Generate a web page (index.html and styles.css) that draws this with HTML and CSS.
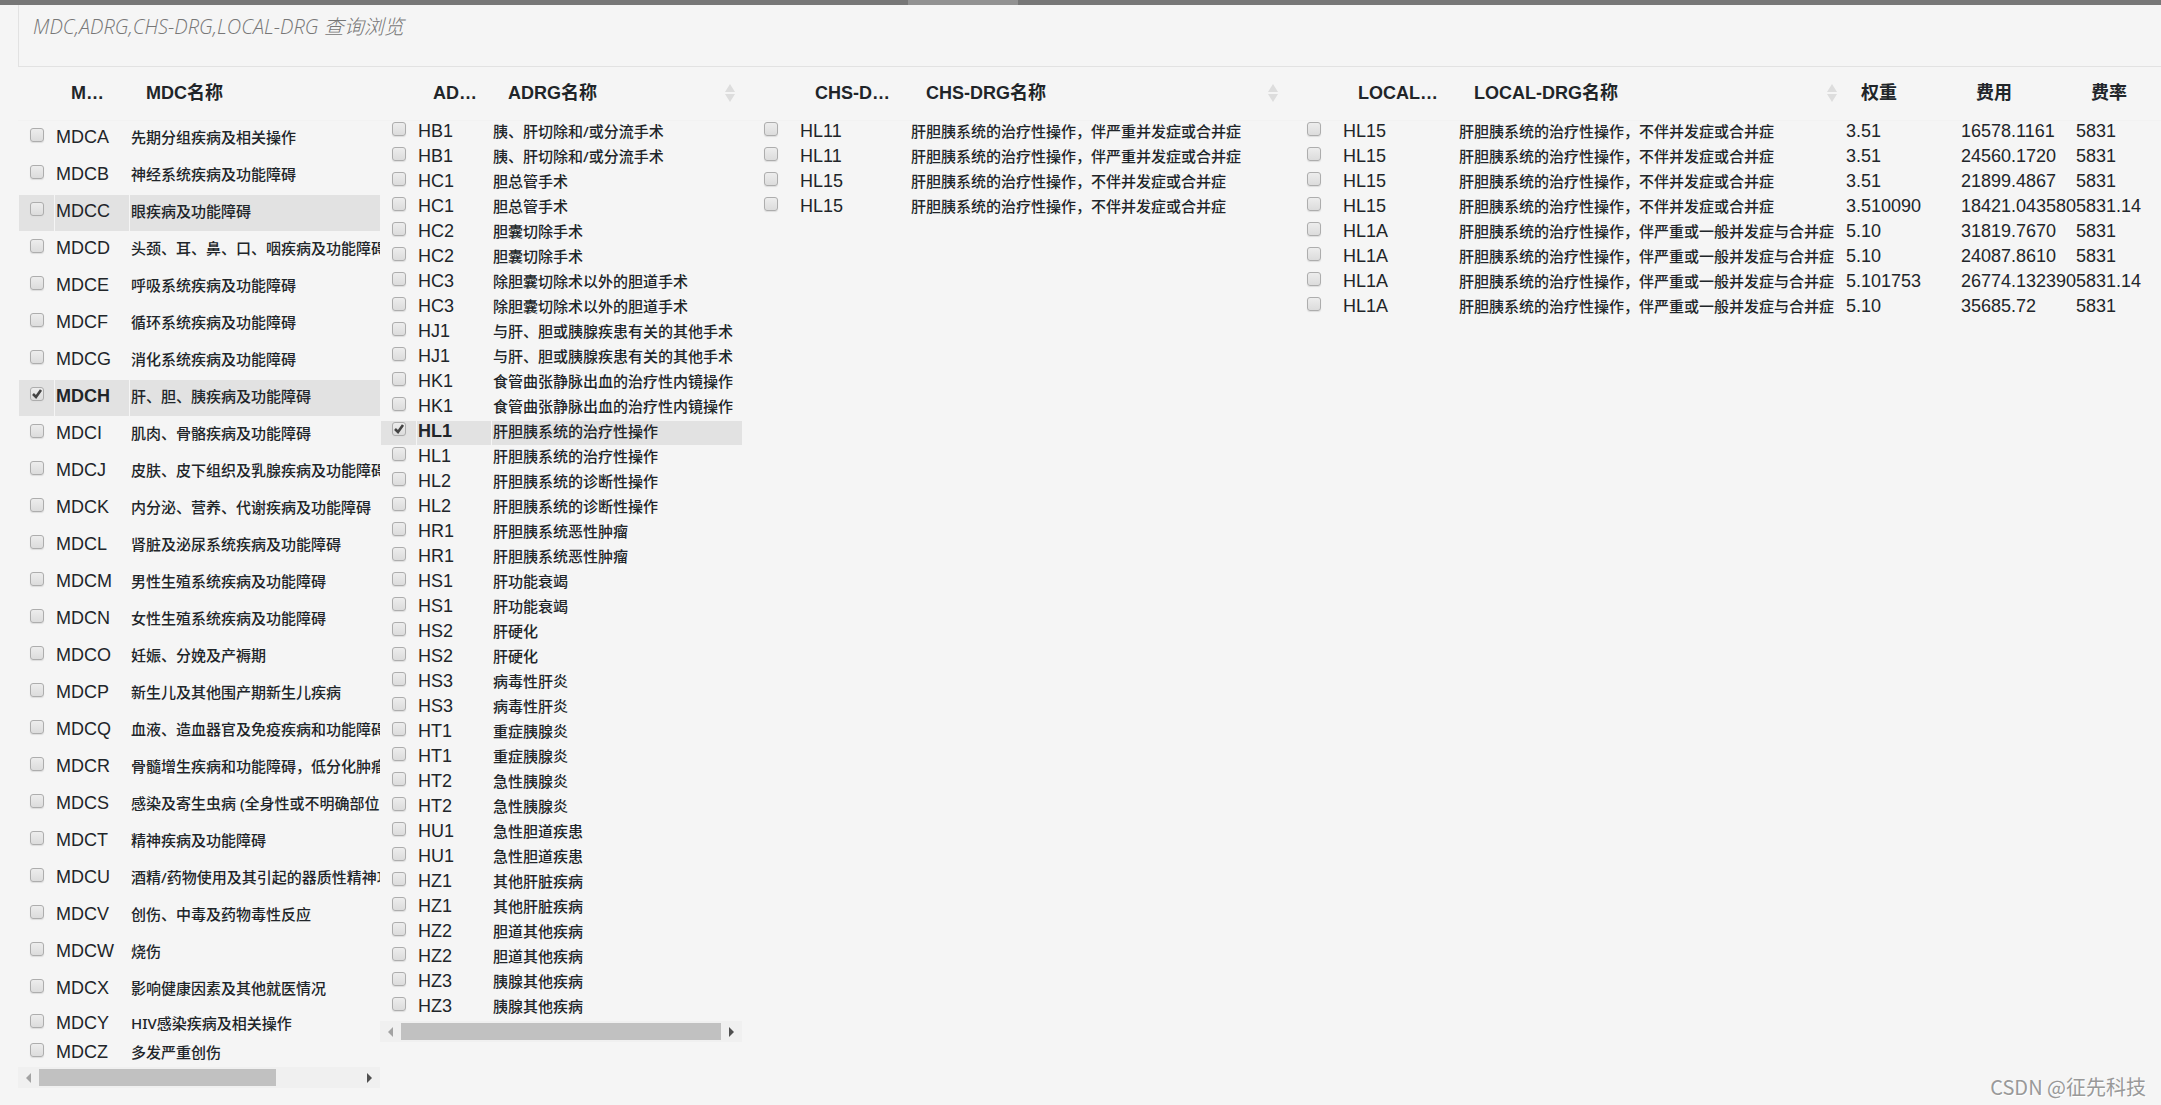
FILE: index.html
```html
<!DOCTYPE html>
<html lang="zh-CN">
<head>
<meta charset="utf-8">
<title>MDC,ADRG,CHS-DRG,LOCAL-DRG 查询浏览</title>
<link rel="stylesheet" href="styles.css">
</head>
<body>
<div class="topbar"><div class="topbar-handle"></div></div>
<header class="page-head"><h1>MDC,ADRG,CHS-DRG,LOCAL-DRG 查询浏览</h1></header>
<main class="panels">
<section class="panel">
<table class="grid roomy">
<colgroup><col class="c-check"><col class="c-code"><col></colgroup>
<thead><tr><th></th><th>M…</th><th>MDC名称</th></tr></thead>
<tbody>
<tr><td><input type="checkbox" aria-label="MDCA"></td><td>MDCA</td><td class="name">先期分组疾病及相关操作</td></tr>
<tr><td><input type="checkbox" aria-label="MDCB"></td><td>MDCB</td><td class="name">神经系统疾病及功能障碍</td></tr>
<tr class="hover"><td><input type="checkbox" aria-label="MDCC"></td><td>MDCC</td><td class="name">眼疾病及功能障碍</td></tr>
<tr><td><input type="checkbox" aria-label="MDCD"></td><td>MDCD</td><td class="name">头颈、耳、鼻、口、咽疾病及功能障碍</td></tr>
<tr><td><input type="checkbox" aria-label="MDCE"></td><td>MDCE</td><td class="name">呼吸系统疾病及功能障碍</td></tr>
<tr><td><input type="checkbox" aria-label="MDCF"></td><td>MDCF</td><td class="name">循环系统疾病及功能障碍</td></tr>
<tr><td><input type="checkbox" aria-label="MDCG"></td><td>MDCG</td><td class="name">消化系统疾病及功能障碍</td></tr>
<tr class="selected"><td><input type="checkbox" aria-label="MDCH" checked></td><td>MDCH</td><td class="name">肝、胆、胰疾病及功能障碍</td></tr>
<tr><td><input type="checkbox" aria-label="MDCI"></td><td>MDCI</td><td class="name">肌肉、骨骼疾病及功能障碍</td></tr>
<tr><td><input type="checkbox" aria-label="MDCJ"></td><td>MDCJ</td><td class="name">皮肤、皮下组织及乳腺疾病及功能障碍</td></tr>
<tr><td><input type="checkbox" aria-label="MDCK"></td><td>MDCK</td><td class="name">内分泌、营养、代谢疾病及功能障碍</td></tr>
<tr><td><input type="checkbox" aria-label="MDCL"></td><td>MDCL</td><td class="name">肾脏及泌尿系统疾病及功能障碍</td></tr>
<tr><td><input type="checkbox" aria-label="MDCM"></td><td>MDCM</td><td class="name">男性生殖系统疾病及功能障碍</td></tr>
<tr><td><input type="checkbox" aria-label="MDCN"></td><td>MDCN</td><td class="name">女性生殖系统疾病及功能障碍</td></tr>
<tr><td><input type="checkbox" aria-label="MDCO"></td><td>MDCO</td><td class="name">妊娠、分娩及产褥期</td></tr>
<tr><td><input type="checkbox" aria-label="MDCP"></td><td>MDCP</td><td class="name">新生儿及其他围产期新生儿疾病</td></tr>
<tr><td><input type="checkbox" aria-label="MDCQ"></td><td>MDCQ</td><td class="name">血液、造血器官及免疫疾病和功能障碍</td></tr>
<tr><td><input type="checkbox" aria-label="MDCR"></td><td>MDCR</td><td class="name">骨髓增生疾病和功能障碍，低分化肿瘤</td></tr>
<tr><td><input type="checkbox" aria-label="MDCS"></td><td>MDCS</td><td class="name">感染及寄生虫病 (全身性或不明确部位的)</td></tr>
<tr><td><input type="checkbox" aria-label="MDCT"></td><td>MDCT</td><td class="name">精神疾病及功能障碍</td></tr>
<tr><td><input type="checkbox" aria-label="MDCU"></td><td>MDCU</td><td class="name">酒精/药物使用及其引起的器质性精神功能障碍</td></tr>
<tr><td><input type="checkbox" aria-label="MDCV"></td><td>MDCV</td><td class="name">创伤、中毒及药物毒性反应</td></tr>
<tr><td><input type="checkbox" aria-label="MDCW"></td><td>MDCW</td><td class="name">烧伤</td></tr>
<tr><td><input type="checkbox" aria-label="MDCX"></td><td>MDCX</td><td class="name">影响健康因素及其他就医情况</td></tr>
<tr class="short"><td><input type="checkbox" aria-label="MDCY"></td><td>MDCY</td><td class="name">HIV感染疾病及相关操作</td></tr>
<tr class="short"><td><input type="checkbox" aria-label="MDCZ"></td><td>MDCZ</td><td class="name">多发严重创伤</td></tr>
</tbody>
</table>
<div class="scrollbar">
<button type="button" class="arrow off" aria-label="向左滚动"><svg viewBox="0 0 21 21"><path d="M13 6v10l-5-5z"/></svg></button>
<div class="track"><div class="thumb partial"></div></div>
<button type="button" class="arrow" aria-label="向右滚动"><svg viewBox="0 0 21 21"><path d="M8 6v10l5-5z"/></svg></button>
</div>
</section>

<section class="panel">
<table class="grid">
<colgroup><col class="c-check"><col class="c-code"><col></colgroup>
<thead><tr><th></th><th>AD…</th><th><div class="sortable">ADRG名称<svg class="sort" viewBox="0 0 10 20"><path d="M5 1l5 8H0zM0 11h10l-5 8z"/></svg></div></th></tr></thead>
<tbody>
<tr><td><input type="checkbox" aria-label="HB1"></td><td>HB1</td><td class="name">胰、肝切除和/或分流手术</td></tr>
<tr><td><input type="checkbox" aria-label="HB1"></td><td>HB1</td><td class="name">胰、肝切除和/或分流手术</td></tr>
<tr><td><input type="checkbox" aria-label="HC1"></td><td>HC1</td><td class="name">胆总管手术</td></tr>
<tr><td><input type="checkbox" aria-label="HC1"></td><td>HC1</td><td class="name">胆总管手术</td></tr>
<tr><td><input type="checkbox" aria-label="HC2"></td><td>HC2</td><td class="name">胆囊切除手术</td></tr>
<tr><td><input type="checkbox" aria-label="HC2"></td><td>HC2</td><td class="name">胆囊切除手术</td></tr>
<tr><td><input type="checkbox" aria-label="HC3"></td><td>HC3</td><td class="name">除胆囊切除术以外的胆道手术</td></tr>
<tr><td><input type="checkbox" aria-label="HC3"></td><td>HC3</td><td class="name">除胆囊切除术以外的胆道手术</td></tr>
<tr><td><input type="checkbox" aria-label="HJ1"></td><td>HJ1</td><td class="name">与肝、胆或胰腺疾患有关的其他手术</td></tr>
<tr><td><input type="checkbox" aria-label="HJ1"></td><td>HJ1</td><td class="name">与肝、胆或胰腺疾患有关的其他手术</td></tr>
<tr><td><input type="checkbox" aria-label="HK1"></td><td>HK1</td><td class="name">食管曲张静脉出血的治疗性内镜操作</td></tr>
<tr><td><input type="checkbox" aria-label="HK1"></td><td>HK1</td><td class="name">食管曲张静脉出血的治疗性内镜操作</td></tr>
<tr class="selected"><td><input type="checkbox" aria-label="HL1" checked></td><td>HL1</td><td class="name">肝胆胰系统的治疗性操作</td></tr>
<tr><td><input type="checkbox" aria-label="HL1"></td><td>HL1</td><td class="name">肝胆胰系统的治疗性操作</td></tr>
<tr><td><input type="checkbox" aria-label="HL2"></td><td>HL2</td><td class="name">肝胆胰系统的诊断性操作</td></tr>
<tr><td><input type="checkbox" aria-label="HL2"></td><td>HL2</td><td class="name">肝胆胰系统的诊断性操作</td></tr>
<tr><td><input type="checkbox" aria-label="HR1"></td><td>HR1</td><td class="name">肝胆胰系统恶性肿瘤</td></tr>
<tr><td><input type="checkbox" aria-label="HR1"></td><td>HR1</td><td class="name">肝胆胰系统恶性肿瘤</td></tr>
<tr><td><input type="checkbox" aria-label="HS1"></td><td>HS1</td><td class="name">肝功能衰竭</td></tr>
<tr><td><input type="checkbox" aria-label="HS1"></td><td>HS1</td><td class="name">肝功能衰竭</td></tr>
<tr><td><input type="checkbox" aria-label="HS2"></td><td>HS2</td><td class="name">肝硬化</td></tr>
<tr><td><input type="checkbox" aria-label="HS2"></td><td>HS2</td><td class="name">肝硬化</td></tr>
<tr><td><input type="checkbox" aria-label="HS3"></td><td>HS3</td><td class="name">病毒性肝炎</td></tr>
<tr><td><input type="checkbox" aria-label="HS3"></td><td>HS3</td><td class="name">病毒性肝炎</td></tr>
<tr><td><input type="checkbox" aria-label="HT1"></td><td>HT1</td><td class="name">重症胰腺炎</td></tr>
<tr><td><input type="checkbox" aria-label="HT1"></td><td>HT1</td><td class="name">重症胰腺炎</td></tr>
<tr><td><input type="checkbox" aria-label="HT2"></td><td>HT2</td><td class="name">急性胰腺炎</td></tr>
<tr><td><input type="checkbox" aria-label="HT2"></td><td>HT2</td><td class="name">急性胰腺炎</td></tr>
<tr><td><input type="checkbox" aria-label="HU1"></td><td>HU1</td><td class="name">急性胆道疾患</td></tr>
<tr><td><input type="checkbox" aria-label="HU1"></td><td>HU1</td><td class="name">急性胆道疾患</td></tr>
<tr><td><input type="checkbox" aria-label="HZ1"></td><td>HZ1</td><td class="name">其他肝脏疾病</td></tr>
<tr><td><input type="checkbox" aria-label="HZ1"></td><td>HZ1</td><td class="name">其他肝脏疾病</td></tr>
<tr><td><input type="checkbox" aria-label="HZ2"></td><td>HZ2</td><td class="name">胆道其他疾病</td></tr>
<tr><td><input type="checkbox" aria-label="HZ2"></td><td>HZ2</td><td class="name">胆道其他疾病</td></tr>
<tr><td><input type="checkbox" aria-label="HZ3"></td><td>HZ3</td><td class="name">胰腺其他疾病</td></tr>
<tr><td><input type="checkbox" aria-label="HZ3"></td><td>HZ3</td><td class="name">胰腺其他疾病</td></tr>
</tbody>
</table>
<div class="scrollbar">
<button type="button" class="arrow off" aria-label="向左滚动"><svg viewBox="0 0 21 21"><path d="M13 6v10l-5-5z"/></svg></button>
<div class="track"><div class="thumb"></div></div>
<button type="button" class="arrow" aria-label="向右滚动"><svg viewBox="0 0 21 21"><path d="M8 6v10l5-5z"/></svg></button>
</div>
</section>

<section class="panel">
<table class="grid">
<colgroup><col class="c-check-wide"><col class="c-code-wide"><col></colgroup>
<thead><tr><th></th><th>CHS-D…</th><th><div class="sortable">CHS-DRG名称<svg class="sort" viewBox="0 0 10 20"><path d="M5 1l5 8H0zM0 11h10l-5 8z"/></svg></div></th></tr></thead>
<tbody>
<tr><td><input type="checkbox" aria-label="HL11"></td><td>HL11</td><td class="name">肝胆胰系统的治疗性操作，伴严重并发症或合并症</td></tr>
<tr><td><input type="checkbox" aria-label="HL11"></td><td>HL11</td><td class="name">肝胆胰系统的治疗性操作，伴严重并发症或合并症</td></tr>
<tr><td><input type="checkbox" aria-label="HL15"></td><td>HL15</td><td class="name">肝胆胰系统的治疗性操作，不伴并发症或合并症</td></tr>
<tr><td><input type="checkbox" aria-label="HL15"></td><td>HL15</td><td class="name">肝胆胰系统的治疗性操作，不伴并发症或合并症</td></tr>
</tbody>
</table>
</section>

<section class="panel">
<table class="grid">
<colgroup><col class="c-check-wide"><col class="c-local"><col><col class="c-num"><col class="c-num"><col class="c-rate"></colgroup>
<thead><tr><th></th><th>LOCAL…</th><th><div class="sortable">LOCAL-DRG名称<svg class="sort" viewBox="0 0 10 20"><path d="M5 1l5 8H0zM0 11h10l-5 8z"/></svg></div></th><th>权重</th><th>费用</th><th>费率</th></tr></thead>
<tbody>
<tr><td><input type="checkbox" aria-label="HL15"></td><td>HL15</td><td class="name">肝胆胰系统的治疗性操作，不伴并发症或合并症</td><td>3.51</td><td>16578.1161</td><td>5831</td></tr>
<tr><td><input type="checkbox" aria-label="HL15"></td><td>HL15</td><td class="name">肝胆胰系统的治疗性操作，不伴并发症或合并症</td><td>3.51</td><td>24560.1720</td><td>5831</td></tr>
<tr><td><input type="checkbox" aria-label="HL15"></td><td>HL15</td><td class="name">肝胆胰系统的治疗性操作，不伴并发症或合并症</td><td>3.51</td><td>21899.4867</td><td>5831</td></tr>
<tr><td><input type="checkbox" aria-label="HL15"></td><td>HL15</td><td class="name">肝胆胰系统的治疗性操作，不伴并发症或合并症</td><td>3.510090</td><td>18421.043580</td><td>5831.14</td></tr>
<tr><td><input type="checkbox" aria-label="HL1A"></td><td>HL1A</td><td class="name">肝胆胰系统的治疗性操作，伴严重或一般并发症与合并症</td><td>5.10</td><td>31819.7670</td><td>5831</td></tr>
<tr><td><input type="checkbox" aria-label="HL1A"></td><td>HL1A</td><td class="name">肝胆胰系统的治疗性操作，伴严重或一般并发症与合并症</td><td>5.10</td><td>24087.8610</td><td>5831</td></tr>
<tr><td><input type="checkbox" aria-label="HL1A"></td><td>HL1A</td><td class="name">肝胆胰系统的治疗性操作，伴严重或一般并发症与合并症</td><td>5.101753</td><td>26774.132390</td><td>5831.14</td></tr>
<tr><td><input type="checkbox" aria-label="HL1A"></td><td>HL1A</td><td class="name">肝胆胰系统的治疗性操作，伴严重或一般并发症与合并症</td><td>5.10</td><td>35685.72</td><td>5831</td></tr>
</tbody>
</table>
</section>
</main>
<div class="watermark">CSDN @征先科技</div>
</body>
</html>
```
FILE: styles.css
```css
* { box-sizing: border-box; }

body {
  margin: 0;
  background: #f5f5f5;
  color: #212529;
  font: 18px/24px "Liberation Sans", "Noto Sans CJK SC", sans-serif;
}

.topbar {
  display: flex;
  justify-content: center;
  height: 5px;
  padding-right: 236px;
  background: #777;
}

.topbar-handle { width: 110px; background: #929292; }

.page-head {
  height: 62px;
  margin-left: 18px;
  padding: 8px 14px;
  border-left: 1px solid #e2e2e2;
  border-bottom: 1px solid #e2e2e2;
}

h1 {
  margin: 0;
  color: #777;
  font: italic 300 20px/28px "Open Sans", "Noto Sans CJK SC", sans-serif;
}

.panels {
  display: grid;
  grid-template-columns: minmax(0, 362fr) minmax(0, 362fr) minmax(0, 543fr) minmax(0, 876fr);
  align-items: start;
  margin-left: 18px;
}

.panel { overflow: hidden; }

.grid {
  width: 100%;
  table-layout: fixed;
  border-collapse: separate;
  border-spacing: 0;
}

.c-check { width: 36px; }
.c-check-wide { width: 56px; }
.c-code { width: 75px; }
.c-code-wide { width: 111px; }
.c-local { width: 116px; }
.c-num { width: 115px; }
.c-rate { width: 87px; }

th {
  height: 54px;
  padding: 0 0 2px 17px;
  border-bottom: 1px solid #f2f2f2;
  text-align: left;
  white-space: nowrap;
}

.sortable {
  display: flex;
  justify-content: space-between;
  align-items: center;
  padding-right: 7px;
}

.sort { width: 10px; height: 20px; fill: #ddd; }

td {
  height: 25px;
  padding: 0 0 5px 1px;
  border-left: 1px solid #f5f5f5;
  border-bottom: 1px solid #f5f5f5;
  line-height: 18px;
  white-space: nowrap;
}

td:first-child { padding: 0; }

.name {
  overflow: hidden;
  font-family: "Noto Sans", "Noto Sans CJK SC", sans-serif;
  font-size: 15px;
  font-weight: 500;
}

.roomy td { height: 37px; }

.roomy .short td {
  height: 29px;
  padding-bottom: 0;
}

.hover td,
.selected td { background: #e2e2e2; }
.selected td:nth-child(2) { font-weight: bold; }

input[type="checkbox"] {
  appearance: none;
  display: block;
  width: 14px;
  height: 14px;
  margin: 0 auto 9px;
  border: 1px solid #adadad;
  border-radius: 3px;
  background: linear-gradient(#ededed, #dcdcdc);
  box-shadow: 0 1px 1px #ddd;
}

.short input[type="checkbox"] { margin-bottom: 5px; }

input[type="checkbox"]:checked {
  background: url("data:image/svg+xml,%3Csvg xmlns='http://www.w3.org/2000/svg' viewBox='0 0 12 12'%3E%3Cpath d='M2 6l3 3 5-7' fill='none' stroke='%23444' stroke-width='2.6'/%3E%3C/svg%3E"), linear-gradient(#ededed, #dcdcdc);
}

.scrollbar { display: flex; height: 21px; background: #f0f0f0; }

.arrow { width: 21px; height: 21px; padding: 0; border: 0; background: none; }
.arrow svg { display: block; fill: #505050; }
.arrow.off svg { fill: #a3a3a3; }

.track { flex: 1; padding: 2px 0; }
.thumb { height: 17px; background: #c1c1c1; }
.thumb.partial { width: 74%; }

.watermark {
  position: absolute;
  right: 15px;
  bottom: 4px;
  color: #999;
  font: 20px/28px "Noto Sans CJK SC", sans-serif;
  text-shadow: 1px 1px 1px #fff;
}
```
